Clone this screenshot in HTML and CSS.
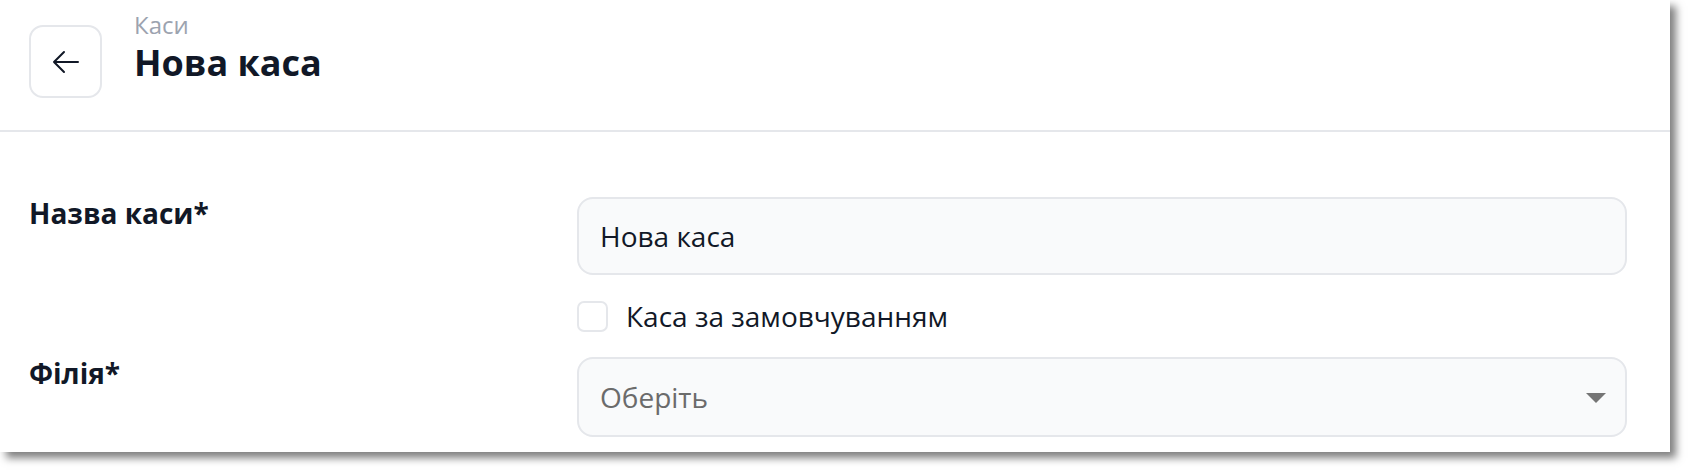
FILE: index.html
```html
<!DOCTYPE html>
<html lang="uk">
<head>
	<meta charset="UTF-8"/>
	<title>Нова каса</title>
	<link rel="stylesheet" href="styles.css">
</head>
<body>
<div class="card">
	<div class="page_head">
		<button class="back_btn" type="button">
			<svg width="32" height="32" viewBox="0 0 24 24" fill="none" stroke="#111827" stroke-width="1.5" stroke-linecap="round" stroke-linejoin="round"><path d="M10.5 19.5 3 12m0 0 7.5-7.5M3 12h18"/></svg>
		</button>
		<div class="head_text">
			<div class="crumb">Каси</div>
			<h1 class="title">Нова каса</h1>
		</div>
	</div>
	<form class="form">
		<label class="form_label" for="cashName">Назва каси*</label>
		<input class="field" id="cashName" type="text" value="Нова каса"/>

		<label class="check_row">
			<input class="check" type="checkbox"/>
			<span>Каса за замовчуванням</span>
		</label>

		<label class="form_label" for="branch">Філія*</label>
		<div class="select_wrap">
			<select class="field select" id="branch">
				<option>Оберіть</option>
			</select>
			<svg class="select_arrow" width="20" height="10" viewBox="0 0 20 10"><path d="M0 0h20L10 10z" fill="#757575"/></svg>
		</div>
	</form>
</div>
</body>
</html>
```

FILE: styles.css
```css
*{margin:0;padding:0;box-sizing:border-box;}
html,body{height:100%;}
body{font-family:"Open Sans","Noto Sans",sans-serif;background:#fff;color:#111827;}
.card{width:1670px;height:452px;overflow:hidden;background:#fff;box-shadow:6px 6px 8px rgba(0,0,0,0.5);}
.page_head{display:flex;align-items:flex-start;gap:32px;height:132px;padding:9px 29px 0;border-bottom:2px solid #e5e7eb;}
.back_btn{display:flex;align-items:center;justify-content:center;width:73px;height:73px;margin-top:16px;background:#fff;border:2px solid #e5e7eb;border-radius:14px;cursor:pointer;}
.crumb{font-size:24px;line-height:32px;color:#9ca3af;}
.title{font-size:36px;line-height:44px;font-weight:700;color:#111827;}
.form{display:grid;grid-template-columns:548px 1fr;row-gap:25px;padding:65px 43px 0 29px;}
.form_label{font-size:28px;line-height:32px;font-weight:700;color:#111827;}
.field{width:100%;height:78px;padding:0 21px;font:28px "Open Sans","Noto Sans",sans-serif;color:#111827;background:#f9fafb;border:2px solid #e5e7eb;border-radius:16px;outline:none;}
.check_row{grid-column:2;display:flex;align-items:center;gap:18px;height:32px;font-size:28px;line-height:32px;color:#111827;}
.check{appearance:none;-webkit-appearance:none;width:31px;height:31px;background:#fff;border:2px solid #e5e7eb;border-radius:7px;}
.select_wrap{position:relative;}
.select{height:80px;appearance:none;-webkit-appearance:none;color:#6b6b6b;}
.select_arrow{position:absolute;right:21px;top:36px;pointer-events:none;}
```
